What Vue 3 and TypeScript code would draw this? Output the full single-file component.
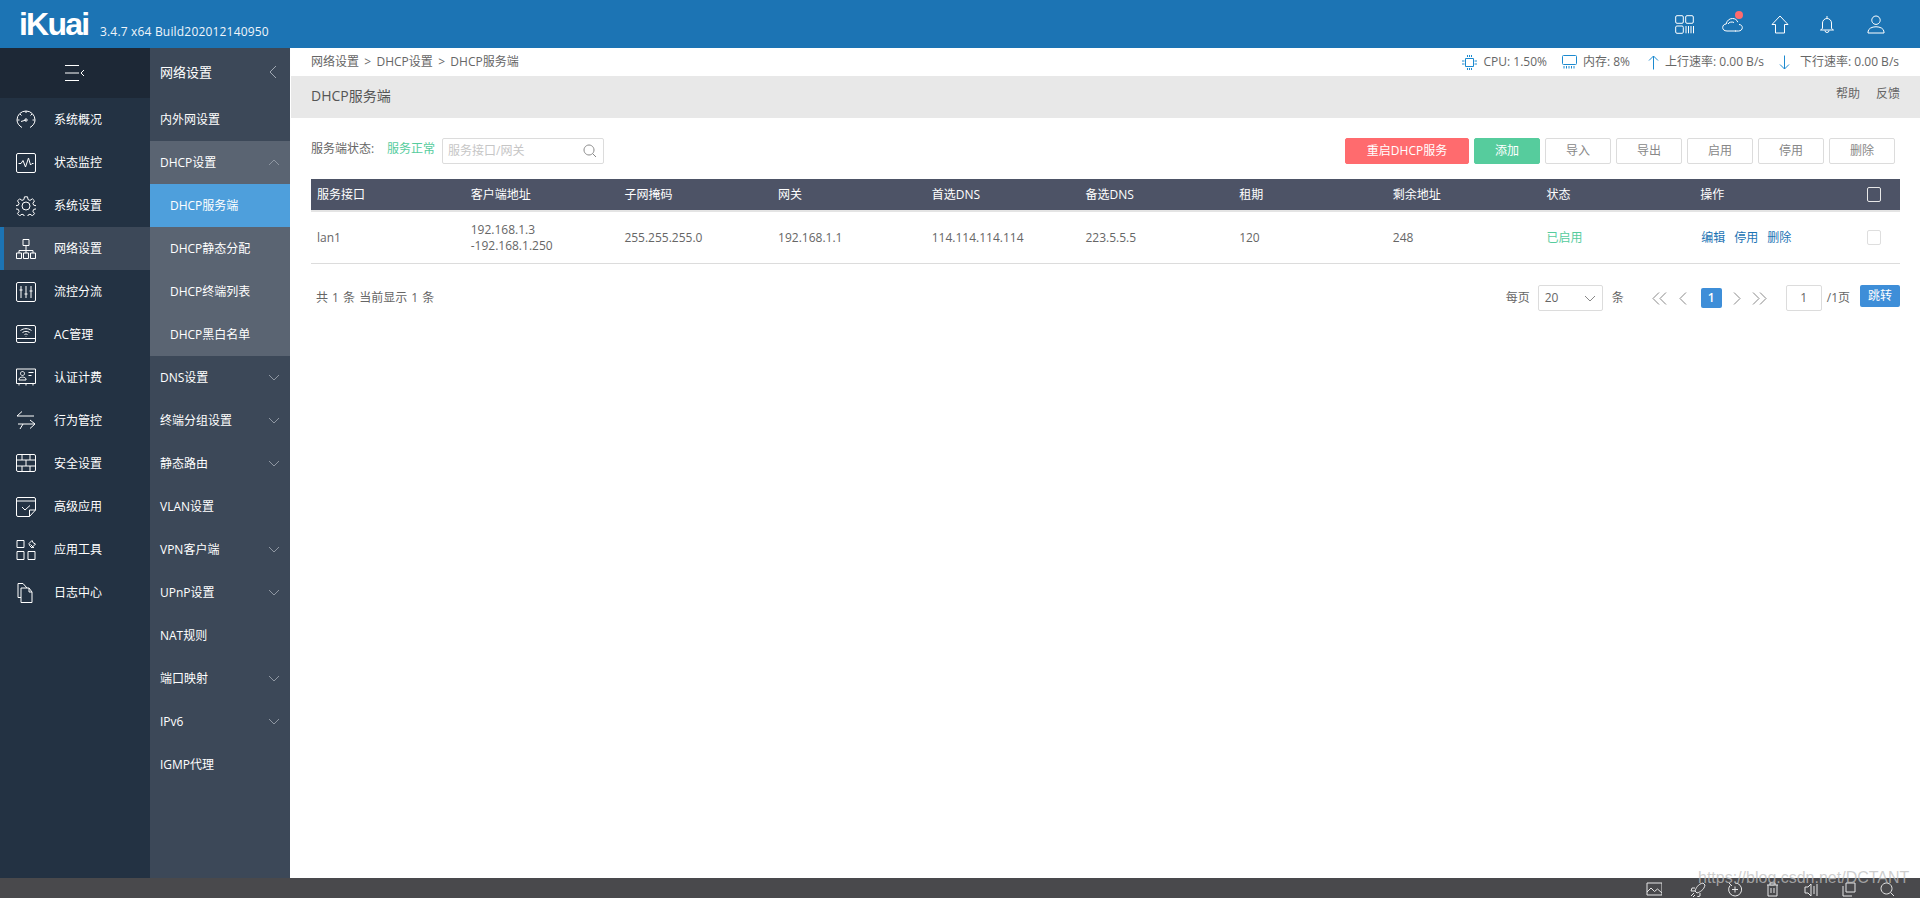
<script setup lang="ts">
const icons: Record<string, string> = {
  gauge: 'M6 17.500C3 15.800 1 13 1 10a9 9 0 0 1 18 0c0 3-2 5.800-5 7.500M3.500 10H1.500M16.500 10h2M10 1v2M4 4l1.500 1.500M16 4l-1.500 1.500M5 11.500l5-1.500M8.800 10a1.200 1.200 0 1 0 2.400 0a1.200 1.200 0 1 0-2.400 0',
  monitor: 'M2 .5h16a1.500 1.500 0 0 1 1.500 1.500v16a1.500 1.500 0 0 1-1.500 1.500H2A1.500 1.500 0 0 1 .5 18V2A1.500 1.500 0 0 1 2 .5zM2.500 10.500h2.500l2-3 2.500 6.500 3-9 2 7 1.500-1.500h1.500',
  gear: 'M8.500.8h3l.6 2.800 1.900.8 2.400-1.600 2.100 2.100-1.600 2.400.8 1.900 2.800.6v3l-2.800.6-.8 1.900 1.600 2.400-2.100 2.100-2.400-1.600-1.900.8-.6 2.800h-3l-.6-2.800-1.900-.8-2.400 1.600-2.100-2.100 1.600-2.400-.8-1.900-2.800-.6v-3l2.800-.6.8-1.900-1.600-2.400 2.100-2.100 2.400 1.600 1.900-.8zM6 10a4 4 0 1 0 8 0a4 4 0 1 0-8 0',
  network: 'M7 .5h6v6H7zM10 6.500v5M3 11.500h14M3 11.500v2.500M10 11.500v2.500M17 11.500v2.500M.5 14h5v5.500h-5zM7.500 14h5v5.500h-5zM14.500 14h5v5.500h-5z',
  sliders: 'M2 .5h16a1.500 1.500 0 0 1 1.500 1.500v16a1.500 1.500 0 0 1-1.500 1.500H2A1.500 1.500 0 0 1 .5 18V2A1.500 1.500 0 0 1 2 .5zM5 4v12M10 4v12M15 4v12M3.500 8h3M8.500 12h3M13.500 9h3',
  wifi: 'M2 .5h16a1.500 1.500 0 0 1 1.500 1.500v14a1.500 1.500 0 0 1-1.500 1.500H2A1.500 1.500 0 0 1 .5 16V2A1.500 1.500 0 0 1 2 .5zM.5 13.500h19M4.500 5.500c3.500-2.500 7.500-2.500 11 0M6.500 7.500c2.300-1.500 4.700-1.500 7 0M8.500 9.500c1-.6 2-.6 3 0M10 11v.5',
  card: 'M.5 1h19v14.500H.5zM6.500 3.500a2 2 0 1 1-.01 0M3 11c.5-2.500 6.500-2.500 7 0v1H3zM12.500 4.500h5M12.500 7.500h3M3 15.500v2M10 15.500v2M17 15.500v2',
  swap: 'M6 .5L1 5h17M19 13H2M14 9l5 4-5 4.500M7 13l-3 5',
  wall: 'M2 .5h16a1.500 1.500 0 0 1 1.500 1.500v14a1.500 1.500 0 0 1-1.500 1.500H2A1.500 1.500 0 0 1 .5 16V2A1.500 1.500 0 0 1 2 .5zM.5 6h19M.5 12h19M6 .5V6M14 .5V6M10 6v6M6 12v5.500M14 12v5.500',
  note: 'M19.500 13V2A1.500 1.500 0 0 0 18 .5H2A1.500 1.500 0 0 0 .5 2v16A1.500 1.500 0 0 0 2 19.500h11.500zM.5 4h19M6 10l3 3 5-4.500M13.500 19.500V13h6',
  apps: 'M1 .5h7v7H1zM1 11.500h7v8H1zM12 11.500h7v8h-7zM13 3.500l3-3 1.200 2.300L19.500 4 17 6.500l-1 1.500-2.500-2.500zM14.500 4.500l3.500 3.500',
  docs: 'M7 .5H2v14h3M5 5h8l3 4v10.500H5zM13 5v4h3M7 .5l4 4.500',
}

const mainMenu = [
  { label: '系统概况', icon: 'gauge' },
  { label: '状态监控', icon: 'monitor' },
  { label: '系统设置', icon: 'gear' },
  { label: '网络设置', icon: 'network', active: true },
  { label: '流控分流', icon: 'sliders' },
  { label: 'AC管理', icon: 'wifi' },
  { label: '认证计费', icon: 'card' },
  { label: '行为管控', icon: 'swap' },
  { label: '安全设置', icon: 'wall' },
  { label: '高级应用', icon: 'note' },
  { label: '应用工具', icon: 'apps' },
  { label: '日志中心', icon: 'docs' },
]

const subMenu = [
  { label: '内外网设置' },
  {
    label: 'DHCP设置',
    open: true,
    children: ['DHCP服务端', 'DHCP静态分配', 'DHCP终端列表', 'DHCP黑白名单'],
  },
  { label: 'DNS设置', arrow: true },
  { label: '终端分组设置', arrow: true },
  { label: '静态路由', arrow: true },
  { label: 'VLAN设置' },
  { label: 'VPN客户端', arrow: true },
  { label: 'UPnP设置', arrow: true },
  { label: 'NAT规则' },
  { label: '端口映射', arrow: true },
  { label: 'IPv6', arrow: true },
  { label: 'IGMP代理' },
]

const columns = ['服务接口', '客户端地址', '子网掩码', '网关', '首选DNS', '备选DNS', '租期', '剩余地址', '状态', '操作']
const plainButtons = ['导入', '导出', '启用', '停用', '删除']
const topIcons = [
  'M2 .7h5a1.300 1.300 0 0 1 1.300 1.300v5A1.300 1.300 0 0 1 7 8.300H2A1.300 1.300 0 0 1 .7 7V2A1.300 1.300 0 0 1 2 .7zM12 .7h5A1.300 1.300 0 0 1 18.300 2v5A1.300 1.300 0 0 1 17 8.300h-5A1.300 1.300 0 0 1 10.700 7V2A1.300 1.300 0 0 1 12 .7zM2 11h5a1.300 1.300 0 0 1 1.300 1.300v5A1.300 1.300 0 0 1 7 18.300H2A1.300 1.300 0 0 1 .7 17v-5A1.300 1.300 0 0 1 2 11zM11 11v7.300M13.500 11v7.300M16 11v7.300M18.500 11v7.300',
  '',
  'M9 1L1 9.500h3.500V18h9V9.500H17z',
  'M8 1v2M3.500 13.500V8a4.500 4.500 0 0 1 9 0v5.500l2 1.500H1.500zM6 15.500a2 2 0 0 0 4 0',
  'M9 1a4.200 4.200 0 1 1-.01 0M1 17c0-7 16-7 16 0v1H1z',
]
const bottomIcons = [
  'M1 1h15v12H1zM1 10l4-4 3.500 3.500 3-2.500 4.500 4',
  'M13 1c-5 1-7 5-8 8l2 2c3-1 7-3 8-8zM5 6H2L1 9h4M10 11v3l-3 1M4 11l-3 3M5 13l-3 3',
  'M7 1a6.500 6.500 0 1 1-5 2.500M4 7.500h6M7 4.500v6M1 1l3 3',
  'M1 3h11M4 3V1h5v2M2 3v11h9V3M5 6v5M8 6v5',
  'M1 5h3l3-3v12l-3-3H1zM10 4v8M13 2v12',
  'M4 1h9v9H4zM1 4v10h9',
  'M6.500 1a5.500 5.500 0 1 0 .01 0M10.500 10.500L14 14',
]
</script>

<template>
  <div class="page">
    <header class="topbar">
      <div class="brand">iKuai</div>
      <div class="version">3.4.7 x64 Build202012140950</div>
      <div class="top-icons">
        <div v-for="(d, i) in topIcons" :key="i" class="top-icon">
          <svg v-if="d" width="19" height="19" viewBox="0 0 19 19"><path :d="d" /></svg>
          <template v-else>
            <svg width="21" height="15" viewBox="0 0 21 15"><path d="M5 14C2 14 .7 12.300.7 10.500.7 8.500 2.200 7 4.200 7 4.800 3.500 7.500 1.500 10.500 1.500c2.500 0 4.500 1.300 5.300 3.700M6 7c1-2 4-2.500 6-1.500M13 14h3.500c2.200 0 3.800-1.500 3.800-3.300 0-2-1.500-3.200-3.300-3.200M5 14h9" /></svg>
            <span class="dot"></span>
          </template>
        </div>
      </div>
    </header>

    <div class="body">
      <nav class="main-nav">
        <div class="toggle">
          <svg width="22" height="18" viewBox="0 0 22 18"><path d="M1 1.500h14M1 9h14M1 16.500h14M20 6l-3 3 3 3" /></svg>
        </div>
        <div v-for="m in mainMenu" :key="m.label" class="main-item" :class="{ active: m.active }">
          <svg class="main-icon" width="20" height="20" viewBox="0 0 20 20"><path :d="icons[m.icon]" /></svg>
          <span>{{ m.label }}</span>
        </div>
      </nav>

      <nav class="sub-nav">
        <div class="sub-head">
          <span>网络设置</span>
          <svg width="8" height="14" viewBox="0 0 8 14"><path d="M7 1L1 7l6 6" /></svg>
        </div>
        <template v-for="s in subMenu" :key="s.label">
          <div class="sub-item" :class="{ open: s.open }">
            <span>{{ s.label }}</span>
            <svg v-if="s.arrow" width="12" height="7" viewBox="0 0 12 7"><path d="M1 1l5 5 5-5" /></svg>
            <svg v-if="s.open" width="12" height="7" viewBox="0 0 12 7"><path d="M1 6l5-5 5 5" /></svg>
          </div>
          <div
            v-for="(c, i) in s.children"
            :key="c"
            class="sub-child"
            :class="{ selected: i === 0 }"
          >{{ c }}</div>
        </template>
      </nav>

      <main class="content">
        <div class="crumbbar">
          <div class="crumbs">网络设置 &gt; DHCP设置 &gt; DHCP服务端</div>
          <div class="stats">
            <span class="stat cpu">
              <svg width="15" height="17" viewBox="0 0 15 17"><path d="M3.500 4.500h8v8h-8zM5.500 1v2M7.500 1v2M9.500 1v2M5.500 14v2M7.500 14v2M9.500 14v2M0 7h2.500M0 10h2.500M12.500 7H15M12.500 10H15" /></svg>
              CPU: 1.50%
            </span>
            <span class="stat mem">
              <svg width="15" height="14" viewBox="0 0 15 14"><path d="M1.500 .5h12a1 1 0 0 1 1 1v7a1 1 0 0 1-1 1h-12a1 1 0 0 1-1-1v-7a1 1 0 0 1 1-1zM2 11v2.500M4.500 11v2.500M7 11v2.500M9.500 11v2.500M12 11v2.500" /></svg>
              内存: 8%
            </span>
            <span class="stat">
              <svg width="11" height="15" viewBox="0 0 11 15"><path d="M5.500 14.500V1M1 5.500L5.500 1 10 5.500" /></svg>
              上行速率: 0.00 B/s
            </span>
            <span class="stat down">
              <svg width="11" height="15" viewBox="0 0 11 15"><path d="M5.500 .5V14M1 9.500L5.500 14 10 9.500" /></svg>
              下行速率: 0.00 B/s
            </span>
          </div>
        </div>

        <div class="titlebar">
          <span class="title">DHCP服务端</span>
          <span class="help"><span>帮助</span><span>反馈</span></span>
        </div>

        <section class="panel">
          <div class="toolbar">
            <div class="tool-left">
              <span class="state-label">服务端状态:</span>
              <span class="state-ok">服务正常</span>
              <div class="search">
                <span>服务接口/网关</span>
                <svg width="14" height="14" viewBox="0 0 14 14"><path d="M6 1a5 5 0 1 0 .01 0M9.700 9.700L13 13" /></svg>
              </div>
            </div>
            <div class="tool-right">
              <button class="btn restart">重启DHCP服务</button>
              <button class="btn add">添加</button>
              <button v-for="b in plainButtons" :key="b" class="btn plain">{{ b }}</button>
            </div>
          </div>

          <div class="grid head">
            <div v-for="c in columns" :key="c" class="cell">{{ c }}</div>
            <div class="cell check-cell"><span class="check light"></span></div>
          </div>
          <div class="grid row">
            <div class="cell">lan1</div>
            <div class="cell">192.168.1.3<br />-192.168.1.250</div>
            <div class="cell">255.255.255.0</div>
            <div class="cell">192.168.1.1</div>
            <div class="cell">114.114.114.114</div>
            <div class="cell">223.5.5.5</div>
            <div class="cell">120</div>
            <div class="cell">248</div>
            <div class="cell green">已启用</div>
            <div class="cell links"><a>编辑</a><a>停用</a><a>删除</a></div>
            <div class="cell check-cell"><span class="check"></span></div>
          </div>

          <div class="pager">
            <span class="total">共 1 条 当前显示 1 条</span>
            <div class="pager-right">
              <span>每页</span>
              <div class="select">
                <span>20</span>
                <svg width="12" height="7" viewBox="0 0 12 7"><path d="M1 1l5 5 5-5" /></svg>
              </div>
              <span class="tiao">条</span>
              <svg class="pg first" width="15" height="13" viewBox="0 0 15 13"><path d="M7 .5L1 6.500l6 6M14 .5L8 6.500l6 6" /></svg>
              <svg class="pg second" width="8" height="13" viewBox="0 0 8 13"><path d="M7 .5L1 6.500l6 6" /></svg>
              <span class="current">1</span>
              <svg class="pg" width="8" height="13" viewBox="0 0 8 13"><path d="M1 .5l6 6-6 6" /></svg>
              <svg class="pg" width="15" height="13" viewBox="0 0 15 13"><path d="M1 .5l6 6-6 6M8 .5l6 6-6 6" /></svg>
              <span class="page-input">1</span>
              <span>/1页</span>
              <button class="jump">跳转</button>
            </div>
          </div>
        </section>
      </main>
    </div>

    <footer class="footer">
      <svg v-for="(d, i) in bottomIcons" :key="i" width="16" height="15" viewBox="0 0 16 15"><path :d="d" /></svg>
      <span class="watermark">https://blog.csdn.net/DCTANT</span>
    </footer>
  </div>
</template>

<style>
html, body { margin: 0; padding: 0; background: #fff; overflow: hidden; }
</style>

<style scoped>
.page {
  width: 1920px;
  height: 898px;
  display: flex;
  flex-direction: column;
  font: 12px/1.3 "Open Sans", "Noto Sans CJK SC", sans-serif;
  color: #666;
  overflow: hidden;
}
svg { flex: none; }
svg path { fill: none; stroke: currentColor; stroke-width: 1; }

.topbar {
  height: 48px;
  flex: none;
  background: #1c74b4;
  color: #fff;
  display: flex;
  align-items: center;
  padding-left: 19px;
}
.brand {
  font: bold 32px/48px "Liberation Sans", sans-serif;
  letter-spacing: -1.800px;
  width: 81px;
}
.version { font-size: 12px; letter-spacing: 0.180px; color: #f0f5fa; margin-top: 16px; }
.top-icons {
  margin-left: auto;
  display: flex;
  padding-right: 34px;
  gap: 28px;
}
.top-icon {
  position: relative;
  width: 20px;
  height: 20px;
  display: flex;
  align-items: center;
  justify-content: center;
}
.dot {
  position: absolute;
  right: -1px;
  top: -3px;
  width: 8px;
  height: 8px;
  border-radius: 50%;
  background: #ff6b6e;
}

.body { flex: 1; display: flex; min-height: 0; }
.main-nav { width: 150px; flex: none; background: #233243; color: #fff; }
.toggle {
  height: 50px;
  background: #1d2836;
  display: flex;
  align-items: center;
  justify-content: center;
}
.main-item {
  height: 43px;
  display: flex;
  align-items: center;
  padding-left: 16px;
  gap: 18px;
  box-sizing: border-box;
}
.main-item.active { background: #3c4858; border-left: 4px solid #1c74b4; padding-left: 12px; }

.sub-nav { width: 140px; flex: none; background: #3c4858; color: #fff; }
.sub-head {
  height: 50px;
  box-sizing: border-box;
  display: flex;
  align-items: center;
  justify-content: space-between;
  padding: 0 13px 2px 10px;
  font-size: 13px;
}
.sub-head svg { color: #a0a8b2; }
.sub-item {
  height: 43px;
  display: flex;
  align-items: center;
  justify-content: space-between;
  padding: 0 10px 0 10px;
}
.sub-item svg { color: #8f97a2; }
.sub-item.open { background: #5a6472; }
.sub-child {
  height: 43px;
  padding-left: 20px;
  display: flex;
  align-items: center;
  background: #5a6472;
}
.sub-child.selected { background: #4e9fdc; }

.content { flex: 1; min-width: 0; background: #fff; }
.crumbbar {
  height: 28px;
  display: flex;
  align-items: center;
  justify-content: space-between;
  padding: 0 21px 0 21px;
}
.crumbs { word-spacing: 2.200px; }
.stats { display: flex; gap: 15px; }
.stat { display: flex; align-items: center; gap: 6px; }
.stat svg { color: #1c8ad0; }
.stat.cpu { gap: 6px; }
.stat.mem { margin-right: 3px; }
.stat.down { gap: 10px; }

.titlebar {
  height: 42px;
  margin-left: 1px;
  background: #e8e8e8;
  display: flex;
  align-items: center;
  justify-content: space-between;
  padding: 0 20px;
}
.title { font-size: 14px; color: #555; margin-top: -2px; }
.help { display: flex; gap: 16px; margin-top: -6px; }

.panel { padding: 20px 20px 0 21px; }
.toolbar {
  display: flex;
  justify-content: space-between;
  align-items: center;
  height: 26px;
  margin-bottom: 15px;
}
.tool-left { display: flex; align-items: center; }
.state-label { width: 76px; margin-top: -5px; }
.state-ok { color: #56cc9d; width: 55px; margin-top: -5px; }
.search {
  width: 162px;
  height: 26px;
  box-sizing: border-box;
  border: 1px solid #dcdcdc;
  border-radius: 2px;
  display: flex;
  align-items: center;
  justify-content: space-between;
  padding: 0 6px 0 5px;
  color: #c6c6c6;
}
.search svg { color: #888; }
.tool-right { display: flex; gap: 5px; padding-right: 5px; }
.btn {
  height: 26px;
  width: 66px;
  box-sizing: border-box;
  border-radius: 2px;
  border: 1px solid #dcdcdc;
  background: #fff;
  color: #888;
  font: inherit;
  padding: 0;
}
.btn.restart { width: 124px; background: #ff6b6e; border-color: #ff6b6e; color: #fff; }
.btn.add { background: #56cc9d; border-color: #56cc9d; color: #fff; }

.grid {
  display: grid;
  grid-template-columns: repeat(9, 153.700px) 153px 1fr;
  align-items: center;
}
.cell { padding-left: 6px; }
.head {
  height: 33px;
  box-sizing: border-box;
  background: #4d5366;
  color: #fff;
  border-bottom: 2px solid #e4e4e4;
}
.row { height: 51px; border-bottom: 1px solid #dcdcdc; box-sizing: content-box; }
.green { color: #56cc9d; }
.links { display: flex; gap: 9px; color: #1c74b4; padding-left: 7px; }
.check-cell { padding-left: 20px; display: flex; }
.check {
  width: 12px;
  height: 13px;
  border: 1px solid #dedede;
  border-radius: 2px;
}
.check.light { border-color: #e8e8e8; }

.pager {
  display: flex;
  justify-content: space-between;
  align-items: center;
  margin-top: 21px;
  height: 26px;
}
.total { padding-left: 5px; word-spacing: 1px; }
.pager-right { display: flex; align-items: center; }
.select {
  width: 65px;
  height: 26px;
  box-sizing: border-box;
  border: 1px solid #dcdcdc;
  border-radius: 2px;
  margin-left: 8px;
  display: flex;
  align-items: center;
  justify-content: space-between;
  padding: 0 6px;
}
.select svg { color: #888; }
.tiao { margin-left: 9px; }
.pg { color: #888; margin-left: 11px; }
.pg.first { margin-left: 28px; }
.pg.second { margin-left: 12px; }
.current {
  width: 21px;
  height: 20px;
  margin-left: 14px;
  background: #3e8ed8;
  color: #fff;
  border-radius: 2px;
  text-align: center;
  line-height: 20px;
  font-weight: 600;
}
.page-input {
  width: 36px;
  height: 26px;
  margin-left: 19px;
  margin-right: 5px;
  box-sizing: border-box;
  border: 1px solid #dcdcdc;
  border-radius: 2px;
  text-align: center;
  line-height: 24px;
}
.jump {
  width: 40px;
  height: 22px;
  margin-left: 10px;
  margin-top: -4px;
  border: 0;
  padding: 0;
  border-radius: 2px;
  background: #3e8ed8;
  color: #fff;
  font: inherit;
}

.footer {
  position: relative;
  height: 20px;
  flex: none;
  background: #49494c;
  color: #e6e6e6;
  display: flex;
  justify-content: flex-end;
  align-items: flex-end;
  gap: 22px;
  padding-right: 24px;
  padding-bottom: 1px;
  box-sizing: border-box;
}
.footer svg:first-child { margin-right: 6px; }
.watermark {
  position: absolute;
  left: 1698px;
  top: -11px;
  font: 16px/22px "Liberation Sans", sans-serif;
  color: rgba(190, 190, 190, 0.75);
  white-space: nowrap;
}
</style>
